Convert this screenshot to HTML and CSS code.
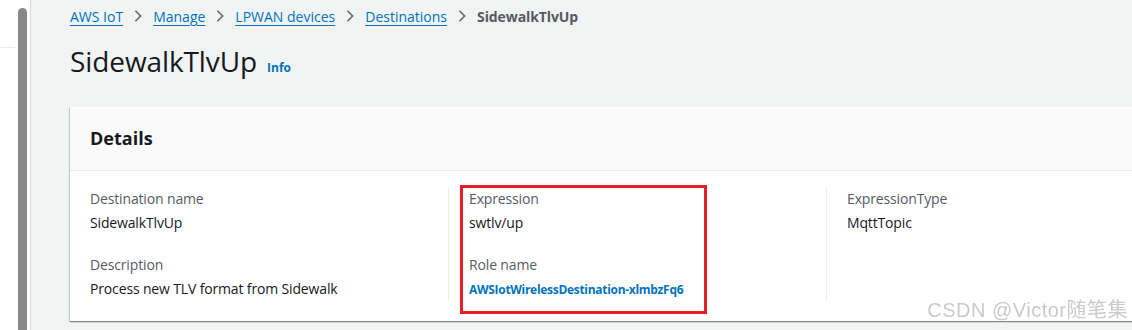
FILE: index.html
```html
<!DOCTYPE html>
<html>
<head>
    <title>SidewalkTlvUp - Destinations</title>
    <link rel="stylesheet" href="styles.css">
</head>
<body>
    <div class="nav-edge"><div class="nav-line"></div></div>
    <div class="scroll-col"><div class="thumb"></div></div>

    <div class="main">
        <div class="crumbs">
            <a href="#">AWS IoT</a>
            <svg class="chev" viewBox="0 0 16 16"><path d="M5 2l6 6-6 6"/></svg>
            <a href="#">Manage</a>
            <svg class="chev" viewBox="0 0 16 16"><path d="M5 2l6 6-6 6"/></svg>
            <a href="#">LPWAN devices</a>
            <svg class="chev" viewBox="0 0 16 16"><path d="M5 2l6 6-6 6"/></svg>
            <a href="#">Destinations</a>
            <svg class="chev" viewBox="0 0 16 16"><path d="M5 2l6 6-6 6"/></svg>
            <span class="current">SidewalkTlvUp</span>
        </div>

        <div class="title-row">
            <h1>SidewalkTlvUp</h1>
            <a href="#" class="info">Info</a>
        </div>

        <div class="card">
            <div class="card-head"><h2>Details</h2></div>
            <div class="card-body">
                <div class="col">
                    <div class="item">
                        <div class="label">Destination name</div>
                        <div class="value">SidewalkTlvUp</div>
                    </div>
                    <div class="item">
                        <div class="label">Description</div>
                        <div class="value">Process new TLV format from Sidewalk</div>
                    </div>
                </div>
                <div class="col">
                    <div class="mark"></div>
                    <div class="item">
                        <div class="label">Expression</div>
                        <div class="value">swtlv/up</div>
                    </div>
                    <div class="item">
                        <div class="label">Role name</div>
                        <div class="value"><a href="#" class="role">AWSIotWirelessDestination-xlmbzFq6</a></div>
                    </div>
                </div>
                <div class="col">
                    <div class="item">
                        <div class="label">ExpressionType</div>
                        <div class="value">MqttTopic</div>
                    </div>
                </div>
            </div>
        </div>
    </div>

    <div class="watermark">CSDN @Victor随笔集</div>
</body>
</html>
```

FILE: styles.css
```css
html, body { margin: 0; height: 100%; }
body { display: flex; overflow: hidden; background: #fff; font-family: "Open Sans", "Noto Sans", Arial, sans-serif; color: #16191f; }

.nav-edge { width: 18px; background: #fff; }
.nav-line { margin-top: 47px; width: 15px; border-top: 1px solid #e9ebed; }
.scroll-col { width: 12px; display: flex; flex-direction: column; background: #fff; border-right: 1px solid #d5dbdb; }
.thumb { flex: 1; width: 9px; margin-top: 8px; background: #888; border-radius: 5px 5px 0 0; }

.main { flex: 1; background: #f2f3f3; padding-left: 39px; min-width: 0; overflow: hidden; }

.crumbs { display: flex; align-items: center; height: 32px; font-size: 14px; }
.crumbs a { color: #0073bb; text-decoration: underline; text-underline-offset: 3px; }
.chev { width: 14px; height: 14px; margin: 0 8px; fill: none; stroke: #687078; stroke-width: 2; }
.current { color: #545b64; font-weight: bold; letter-spacing: -0.1px; }

.title-row { display: flex; align-items: baseline; margin-top: 10px; height: 44px; }
h1 { margin: 0; font-size: 28px; font-weight: normal; letter-spacing: -0.1px; }
.info { margin-left: 10px; font-size: 12px; font-weight: bold; color: #0073bb; text-decoration: none; }

.card { margin-top: 21px; width: 1134px; background: #fff; box-shadow: 0 1px 1px 0 rgba(0, 28, 36, .3), 1px 1px 1px 0 rgba(0, 28, 36, .15), -1px 1px 1px 0 rgba(0, 28, 36, .15); }
.card-head { height: 61px; display: flex; align-items: center; padding: 0 0 2px 20px; background: #fafafa; border-bottom: 1px solid #eaeded; }
h2 { margin: 0; font-size: 18px; font-weight: bold; }

.card-body { display: grid; grid-template-columns: repeat(3, 378px); padding: 17px 0 20px; }
.col { position: relative; padding: 0 20px; display: flex; flex-direction: column; gap: 20px; }
.col + .col { border-left: 1px solid #eaeded; }
.label { font-size: 14px; line-height: 22px; color: #545b64; letter-spacing: -0.15px; }
.value { font-size: 14px; line-height: 22px; margin-top: 2px; letter-spacing: -0.15px; }
.role { font-size: 12px; font-weight: bold; color: #0073bb; text-decoration: none; letter-spacing: -0.3px; }

.mark { position: absolute; left: 11px; top: -3px; width: 241px; height: 123px; border: 3px solid #ea1c24; }

.watermark { position: fixed; right: 4px; bottom: 7px; font-family: "Liberation Sans", "Noto Sans CJK SC", sans-serif; font-size: 20px; letter-spacing: 0.5px; color: rgba(150, 150, 150, .5); }
```
